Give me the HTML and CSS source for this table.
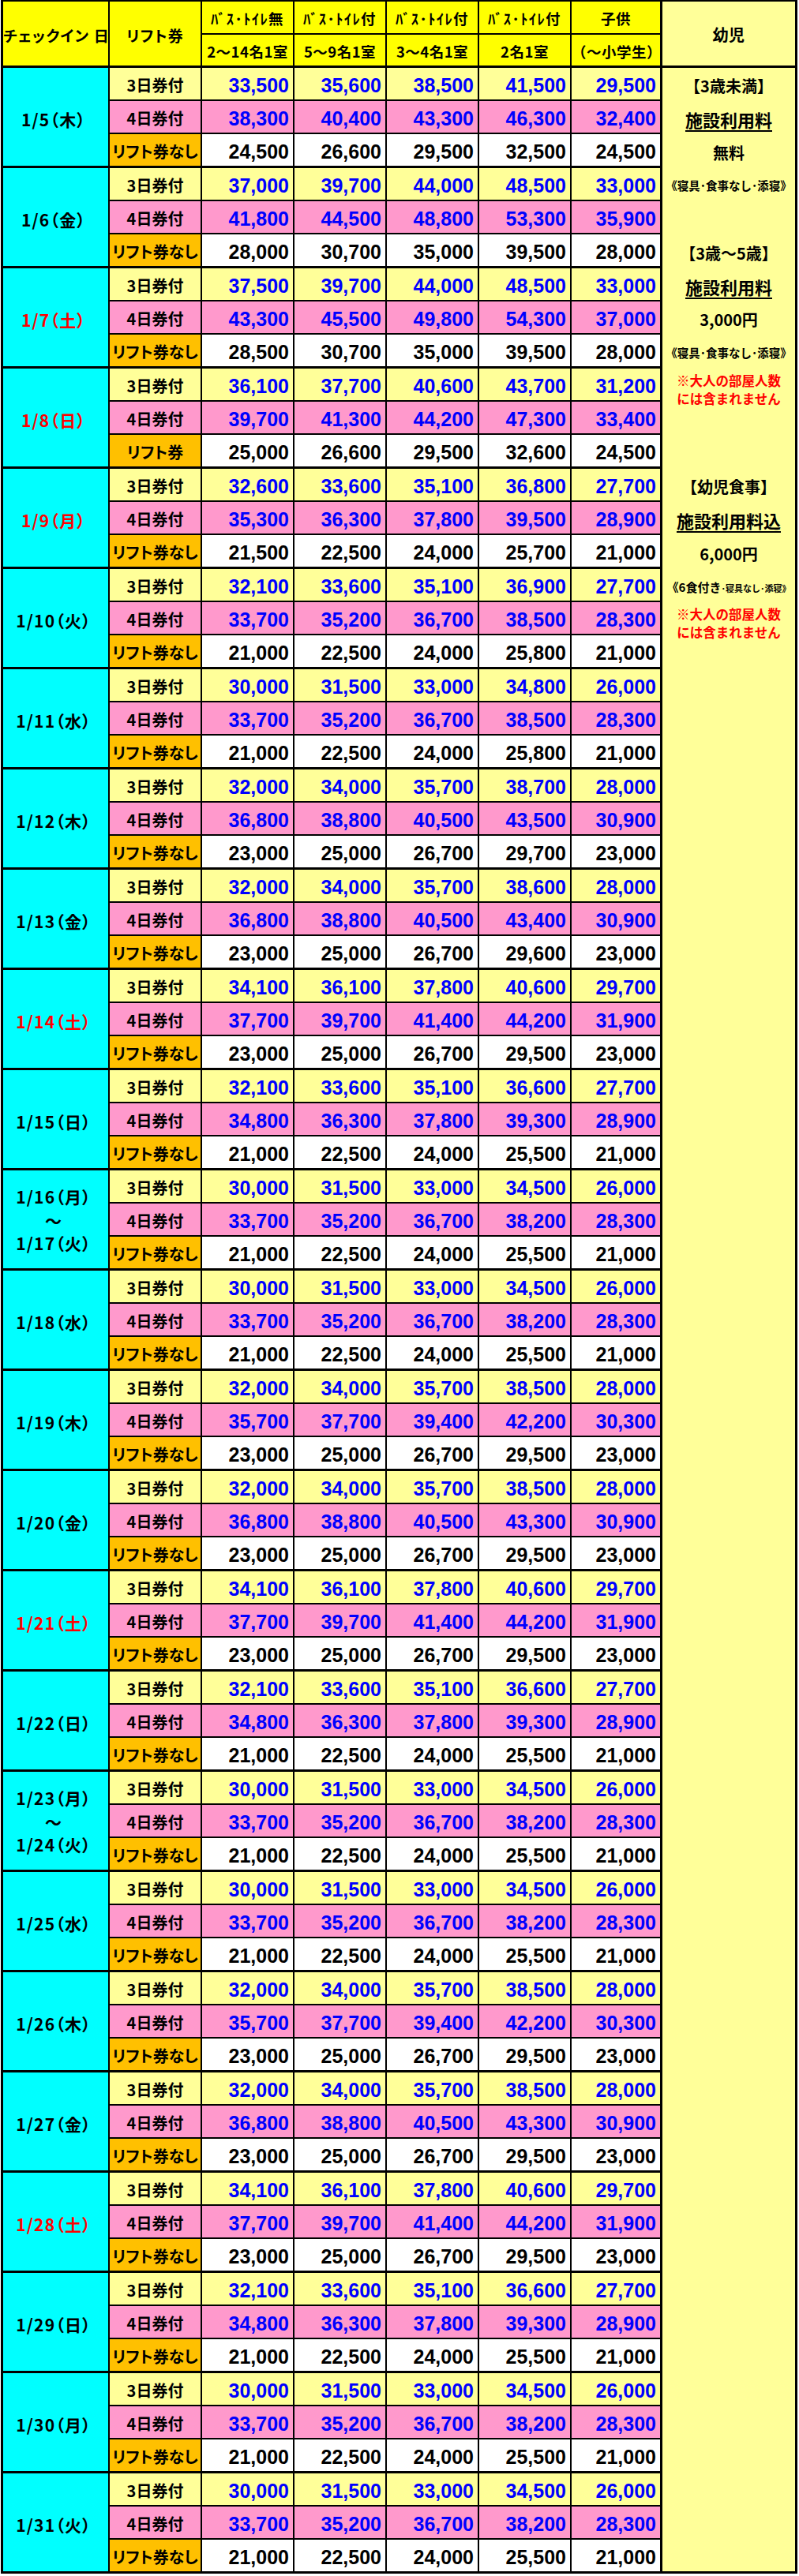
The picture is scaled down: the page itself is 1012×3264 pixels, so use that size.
FILE: index.html
```
<!DOCTYPE html>
<html lang="ja">
<head>
<meta charset="utf-8">
<title>料金表</title>
<link rel="stylesheet" href="styles.css">
</head>
<body>
<table class="price">
<colgroup>
<col class="c-day"><col class="c-lift"><col class="c-n"><col class="c-n"><col class="c-n"><col class="c-n"><col class="c-kid"><col class="c-inf">
</colgroup>
<thead>
<tr class="h1">
<th rowspan="2" class="hd">チェックイン 日</th>
<th rowspan="2" class="hd">リフト券</th>
<th class="hk">ﾊﾞｽ･ﾄｲﾚ無</th><th class="hk">ﾊﾞｽ･ﾄｲﾚ付</th><th class="hk">ﾊﾞｽ･ﾄｲﾚ付</th><th class="hk">ﾊﾞｽ･ﾄｲﾚ付</th><th>子供</th>
<th rowspan="2" class="hinf">幼児</th>
</tr>
<tr class="h2"><th>2～14名1室</th><th>5～9名1室</th><th>3～4名1室</th><th>2名1室</th><th>（～小学生）</th></tr>
</thead>
<tbody>
<tr class="r3"><td class="day" rowspan="3">1/5（木）</td><td class="lb">3日券付</td><td>33,500</td><td>35,600</td><td>38,500</td><td>41,500</td><td>29,500</td>
<td class="inf" rowspan="75">
<div class="info">
<div class="s">【3歳未満】</div>
<div class="s big"><span class="u">施設利用料</span></div>
<div class="s">無料</div>
<div class="s sm">《寝具･食事なし･添寝》</div>
<div class="s"></div>
<div class="s">【3歳～5歳】</div>
<div class="s big"><span class="u">施設利用料</span></div>
<div class="s">3,000円</div>
<div class="s sm">《寝具･食事なし･添寝》</div>
<div class="note">※大人の部屋人数<br>には含まれません</div>
<div class="s"></div>
<div class="s">【幼児食事】</div>
<div class="s big"><span class="u">施設利用料込</span></div>
<div class="s">6,000円</div>
<div class="s sm"><span class="sm1">《6食付き</span><span class="sm2">･寝具なし･添寝》</span></div>
<div class="note">※大人の部屋人数<br>には含まれません</div>
</div>
</td></tr>
<tr class="r4"><td class="lb">4日券付</td><td>38,300</td><td>40,400</td><td>43,300</td><td>46,300</td><td>32,400</td></tr>
<tr class="r0"><td class="lb">リフト券なし</td><td>24,500</td><td>26,600</td><td>29,500</td><td>32,500</td><td>24,500</td></tr>

<tr class="r3"><td class="day" rowspan="3">1/6（金）</td><td class="lb">3日券付</td><td>37,000</td><td>39,700</td><td>44,000</td><td>48,500</td><td>33,000</td></tr>
<tr class="r4"><td class="lb">4日券付</td><td>41,800</td><td>44,500</td><td>48,800</td><td>53,300</td><td>35,900</td></tr>
<tr class="r0"><td class="lb">リフト券なし</td><td>28,000</td><td>30,700</td><td>35,000</td><td>39,500</td><td>28,000</td></tr>

<tr class="r3"><td class="day red" rowspan="3">1/7（土）</td><td class="lb">3日券付</td><td>37,500</td><td>39,700</td><td>44,000</td><td>48,500</td><td>33,000</td></tr>
<tr class="r4"><td class="lb">4日券付</td><td>43,300</td><td>45,500</td><td>49,800</td><td>54,300</td><td>37,000</td></tr>
<tr class="r0"><td class="lb">リフト券なし</td><td>28,500</td><td>30,700</td><td>35,000</td><td>39,500</td><td>28,000</td></tr>

<tr class="r3"><td class="day red" rowspan="3">1/8（日）</td><td class="lb">3日券付</td><td>36,100</td><td>37,700</td><td>40,600</td><td>43,700</td><td>31,200</td></tr>
<tr class="r4"><td class="lb">4日券付</td><td>39,700</td><td>41,300</td><td>44,200</td><td>47,300</td><td>33,400</td></tr>
<tr class="r0"><td class="lb">リフト券</td><td>25,000</td><td>26,600</td><td>29,500</td><td>32,600</td><td>24,500</td></tr>

<tr class="r3"><td class="day red" rowspan="3">1/9（月）</td><td class="lb">3日券付</td><td>32,600</td><td>33,600</td><td>35,100</td><td>36,800</td><td>27,700</td></tr>
<tr class="r4"><td class="lb">4日券付</td><td>35,300</td><td>36,300</td><td>37,800</td><td>39,500</td><td>28,900</td></tr>
<tr class="r0"><td class="lb">リフト券なし</td><td>21,500</td><td>22,500</td><td>24,000</td><td>25,700</td><td>21,000</td></tr>

<tr class="r3"><td class="day" rowspan="3">1/10（火）</td><td class="lb">3日券付</td><td>32,100</td><td>33,600</td><td>35,100</td><td>36,900</td><td>27,700</td></tr>
<tr class="r4"><td class="lb">4日券付</td><td>33,700</td><td>35,200</td><td>36,700</td><td>38,500</td><td>28,300</td></tr>
<tr class="r0"><td class="lb">リフト券なし</td><td>21,000</td><td>22,500</td><td>24,000</td><td>25,800</td><td>21,000</td></tr>

<tr class="r3"><td class="day" rowspan="3">1/11（水）</td><td class="lb">3日券付</td><td>30,000</td><td>31,500</td><td>33,000</td><td>34,800</td><td>26,000</td></tr>
<tr class="r4"><td class="lb">4日券付</td><td>33,700</td><td>35,200</td><td>36,700</td><td>38,500</td><td>28,300</td></tr>
<tr class="r0"><td class="lb">リフト券なし</td><td>21,000</td><td>22,500</td><td>24,000</td><td>25,800</td><td>21,000</td></tr>

<tr class="r3"><td class="day" rowspan="3">1/12（木）</td><td class="lb">3日券付</td><td>32,000</td><td>34,000</td><td>35,700</td><td>38,700</td><td>28,000</td></tr>
<tr class="r4"><td class="lb">4日券付</td><td>36,800</td><td>38,800</td><td>40,500</td><td>43,500</td><td>30,900</td></tr>
<tr class="r0"><td class="lb">リフト券なし</td><td>23,000</td><td>25,000</td><td>26,700</td><td>29,700</td><td>23,000</td></tr>

<tr class="r3"><td class="day" rowspan="3">1/13（金）</td><td class="lb">3日券付</td><td>32,000</td><td>34,000</td><td>35,700</td><td>38,600</td><td>28,000</td></tr>
<tr class="r4"><td class="lb">4日券付</td><td>36,800</td><td>38,800</td><td>40,500</td><td>43,400</td><td>30,900</td></tr>
<tr class="r0"><td class="lb">リフト券なし</td><td>23,000</td><td>25,000</td><td>26,700</td><td>29,600</td><td>23,000</td></tr>

<tr class="r3"><td class="day red" rowspan="3">1/14（土）</td><td class="lb">3日券付</td><td>34,100</td><td>36,100</td><td>37,800</td><td>40,600</td><td>29,700</td></tr>
<tr class="r4"><td class="lb">4日券付</td><td>37,700</td><td>39,700</td><td>41,400</td><td>44,200</td><td>31,900</td></tr>
<tr class="r0"><td class="lb">リフト券なし</td><td>23,000</td><td>25,000</td><td>26,700</td><td>29,500</td><td>23,000</td></tr>

<tr class="r3"><td class="day" rowspan="3">1/15（日）</td><td class="lb">3日券付</td><td>32,100</td><td>33,600</td><td>35,100</td><td>36,600</td><td>27,700</td></tr>
<tr class="r4"><td class="lb">4日券付</td><td>34,800</td><td>36,300</td><td>37,800</td><td>39,300</td><td>28,900</td></tr>
<tr class="r0"><td class="lb">リフト券なし</td><td>21,000</td><td>22,500</td><td>24,000</td><td>25,500</td><td>21,000</td></tr>

<tr class="r3"><td class="day multi" rowspan="3">1/16（月）<br>～<br>1/17（火）</td><td class="lb">3日券付</td><td>30,000</td><td>31,500</td><td>33,000</td><td>34,500</td><td>26,000</td></tr>
<tr class="r4"><td class="lb">4日券付</td><td>33,700</td><td>35,200</td><td>36,700</td><td>38,200</td><td>28,300</td></tr>
<tr class="r0"><td class="lb">リフト券なし</td><td>21,000</td><td>22,500</td><td>24,000</td><td>25,500</td><td>21,000</td></tr>

<tr class="r3"><td class="day" rowspan="3">1/18（水）</td><td class="lb">3日券付</td><td>30,000</td><td>31,500</td><td>33,000</td><td>34,500</td><td>26,000</td></tr>
<tr class="r4"><td class="lb">4日券付</td><td>33,700</td><td>35,200</td><td>36,700</td><td>38,200</td><td>28,300</td></tr>
<tr class="r0"><td class="lb">リフト券なし</td><td>21,000</td><td>22,500</td><td>24,000</td><td>25,500</td><td>21,000</td></tr>

<tr class="r3"><td class="day" rowspan="3">1/19（木）</td><td class="lb">3日券付</td><td>32,000</td><td>34,000</td><td>35,700</td><td>38,500</td><td>28,000</td></tr>
<tr class="r4"><td class="lb">4日券付</td><td>35,700</td><td>37,700</td><td>39,400</td><td>42,200</td><td>30,300</td></tr>
<tr class="r0"><td class="lb">リフト券なし</td><td>23,000</td><td>25,000</td><td>26,700</td><td>29,500</td><td>23,000</td></tr>

<tr class="r3"><td class="day" rowspan="3">1/20（金）</td><td class="lb">3日券付</td><td>32,000</td><td>34,000</td><td>35,700</td><td>38,500</td><td>28,000</td></tr>
<tr class="r4"><td class="lb">4日券付</td><td>36,800</td><td>38,800</td><td>40,500</td><td>43,300</td><td>30,900</td></tr>
<tr class="r0"><td class="lb">リフト券なし</td><td>23,000</td><td>25,000</td><td>26,700</td><td>29,500</td><td>23,000</td></tr>

<tr class="r3"><td class="day red" rowspan="3">1/21（土）</td><td class="lb">3日券付</td><td>34,100</td><td>36,100</td><td>37,800</td><td>40,600</td><td>29,700</td></tr>
<tr class="r4"><td class="lb">4日券付</td><td>37,700</td><td>39,700</td><td>41,400</td><td>44,200</td><td>31,900</td></tr>
<tr class="r0"><td class="lb">リフト券なし</td><td>23,000</td><td>25,000</td><td>26,700</td><td>29,500</td><td>23,000</td></tr>

<tr class="r3"><td class="day" rowspan="3">1/22（日）</td><td class="lb">3日券付</td><td>32,100</td><td>33,600</td><td>35,100</td><td>36,600</td><td>27,700</td></tr>
<tr class="r4"><td class="lb">4日券付</td><td>34,800</td><td>36,300</td><td>37,800</td><td>39,300</td><td>28,900</td></tr>
<tr class="r0"><td class="lb">リフト券なし</td><td>21,000</td><td>22,500</td><td>24,000</td><td>25,500</td><td>21,000</td></tr>

<tr class="r3"><td class="day multi" rowspan="3">1/23（月）<br>～<br>1/24（火）</td><td class="lb">3日券付</td><td>30,000</td><td>31,500</td><td>33,000</td><td>34,500</td><td>26,000</td></tr>
<tr class="r4"><td class="lb">4日券付</td><td>33,700</td><td>35,200</td><td>36,700</td><td>38,200</td><td>28,300</td></tr>
<tr class="r0"><td class="lb">リフト券なし</td><td>21,000</td><td>22,500</td><td>24,000</td><td>25,500</td><td>21,000</td></tr>

<tr class="r3"><td class="day" rowspan="3">1/25（水）</td><td class="lb">3日券付</td><td>30,000</td><td>31,500</td><td>33,000</td><td>34,500</td><td>26,000</td></tr>
<tr class="r4"><td class="lb">4日券付</td><td>33,700</td><td>35,200</td><td>36,700</td><td>38,200</td><td>28,300</td></tr>
<tr class="r0"><td class="lb">リフト券なし</td><td>21,000</td><td>22,500</td><td>24,000</td><td>25,500</td><td>21,000</td></tr>

<tr class="r3"><td class="day" rowspan="3">1/26（木）</td><td class="lb">3日券付</td><td>32,000</td><td>34,000</td><td>35,700</td><td>38,500</td><td>28,000</td></tr>
<tr class="r4"><td class="lb">4日券付</td><td>35,700</td><td>37,700</td><td>39,400</td><td>42,200</td><td>30,300</td></tr>
<tr class="r0"><td class="lb">リフト券なし</td><td>23,000</td><td>25,000</td><td>26,700</td><td>29,500</td><td>23,000</td></tr>

<tr class="r3"><td class="day" rowspan="3">1/27（金）</td><td class="lb">3日券付</td><td>32,000</td><td>34,000</td><td>35,700</td><td>38,500</td><td>28,000</td></tr>
<tr class="r4"><td class="lb">4日券付</td><td>36,800</td><td>38,800</td><td>40,500</td><td>43,300</td><td>30,900</td></tr>
<tr class="r0"><td class="lb">リフト券なし</td><td>23,000</td><td>25,000</td><td>26,700</td><td>29,500</td><td>23,000</td></tr>

<tr class="r3"><td class="day red" rowspan="3">1/28（土）</td><td class="lb">3日券付</td><td>34,100</td><td>36,100</td><td>37,800</td><td>40,600</td><td>29,700</td></tr>
<tr class="r4"><td class="lb">4日券付</td><td>37,700</td><td>39,700</td><td>41,400</td><td>44,200</td><td>31,900</td></tr>
<tr class="r0"><td class="lb">リフト券なし</td><td>23,000</td><td>25,000</td><td>26,700</td><td>29,500</td><td>23,000</td></tr>

<tr class="r3"><td class="day" rowspan="3">1/29（日）</td><td class="lb">3日券付</td><td>32,100</td><td>33,600</td><td>35,100</td><td>36,600</td><td>27,700</td></tr>
<tr class="r4"><td class="lb">4日券付</td><td>34,800</td><td>36,300</td><td>37,800</td><td>39,300</td><td>28,900</td></tr>
<tr class="r0"><td class="lb">リフト券なし</td><td>21,000</td><td>22,500</td><td>24,000</td><td>25,500</td><td>21,000</td></tr>

<tr class="r3"><td class="day" rowspan="3">1/30（月）</td><td class="lb">3日券付</td><td>30,000</td><td>31,500</td><td>33,000</td><td>34,500</td><td>26,000</td></tr>
<tr class="r4"><td class="lb">4日券付</td><td>33,700</td><td>35,200</td><td>36,700</td><td>38,200</td><td>28,300</td></tr>
<tr class="r0"><td class="lb">リフト券なし</td><td>21,000</td><td>22,500</td><td>24,000</td><td>25,500</td><td>21,000</td></tr>

<tr class="r3"><td class="day" rowspan="3">1/31（火）</td><td class="lb">3日券付</td><td>30,000</td><td>31,500</td><td>33,000</td><td>34,500</td><td>26,000</td></tr>
<tr class="r4"><td class="lb">4日券付</td><td>33,700</td><td>35,200</td><td>36,700</td><td>38,200</td><td>28,300</td></tr>
<tr class="r0"><td class="lb">リフト券なし</td><td>21,000</td><td>22,500</td><td>24,000</td><td>25,500</td><td>21,000</td></tr>
</tbody>
</table>
</body>
</html>
```
FILE: styles.css
```
html, body {
  margin: 0;
  padding: 0;
  background: #ffffff;
}

.price {
  border-collapse: collapse;
  table-layout: fixed;
  width: 1009px;
  margin-left: 1px;
  font-family: "Noto Sans CJK JP", sans-serif;
  font-weight: 700;
  color: #000;
  border-top: 2px solid #000;
  border-left: 3px solid #000;
  border-right: 3px solid #000;
  border-bottom: 3px solid #000;
}

.c-day { width: 135.5px; }
.c-lift { width: 117px; }
.c-n { width: 117px; }
.c-kid { width: 114.5px; }
.c-inf { width: 171px; }

.price th,
.price td {
  border: 2px solid #000;
  padding: 0;
  overflow: hidden;
  white-space: nowrap;
}

/* header */
.price th {
  background: #ffff00;
  font-size: 18.5px;
  line-height: 1;
  text-align: center;
  vertical-align: middle;
  padding-top: 3px;
  letter-spacing: 0.5px;
}
.price tr.h1 { height: 42px; }
.price tr.h2 { height: 41.5px; }
.price tr.h2 th { border-bottom: 3px solid #000; }
.price th.hd {
  border-bottom: 3px solid #000;
  font-feature-settings: "palt";
  font-size: 19px;
  letter-spacing: 1.2px;
}
.price th.hk { letter-spacing: 1.4px; }
.price th.hinf {
  background: #ffff99;
  border-left: 3px solid #000;
  border-bottom: 3px solid #000;
  font-size: 20px;
}

/* body rows */
.price tr.r3 { height: 42.5px; }
.price tr.r4 { height: 42px; }
.price tr.r0 { height: 42.5px; }

.price td {
  font-family: "Liberation Sans", Arial, sans-serif;
  font-size: 25px;
  line-height: 1;
  text-align: right;
  vertical-align: middle;
  padding: 5px 5px 0 0;
}

.price tr.r3 td { background: #ffff99; color: #0000ff; }
.price tr.r4 td { background: #ff99cc; color: #0000ff; }
.price tr.r0 td { background: #ffffff; color: #000000; border-bottom: 3px solid #000; }

.price tr td.lb {
  font-family: "Noto Sans CJK JP", sans-serif;
  font-feature-settings: "palt";
  font-size: 20px;
  letter-spacing: 0;
  text-align: center;
  color: #000;
  padding: 4px 0 0 0;
}
.price tr.r0 td.lb { background: #ffc000; }

.price tr td.day {
  background: #00ffff;
  color: #000;
  font-family: "Noto Sans CJK JP", sans-serif;
  font-feature-settings: "palt";
  font-size: 21px;
  letter-spacing: 1.2px;
  text-align: center;
  padding: 6px 5px 0 0;
  border-bottom: 3px solid #000;
}
.price tr td.day.red { color: #ff0000; }
.price tr td.day.multi { line-height: 29.5px; padding-top: 3px; }

/* infant info column */
.price tr td.inf {
  background: #ffff99;
  color: #000;
  vertical-align: top;
  text-align: center;
  padding: 0;
  border-left: 3px solid #000;
  border-bottom: 3px solid #000;
  font-family: "Noto Sans CJK JP", sans-serif;
}

.info {
  display: flex;
  flex-direction: column;
}
.info .s {
  height: 42.33px;
  display: flex;
  align-items: center;
  justify-content: center;
  padding-top: 4px;
  box-sizing: border-box;
  font-size: 20px;
  line-height: 1;
}
.info .s.big { font-size: 22px; }
.info .u {
  text-decoration: underline;
  text-decoration-thickness: 2px;
  text-underline-offset: 4px;
}
.info .s.sm {
  font-size: 14.5px;
  align-items: baseline;
  padding-top: 15px;
}
.info .sm1 { font-size: 15px; }
.info .sm2 { font-size: 11px; }

.info .note {
  height: 84.66px;
  box-sizing: border-box;
  padding-top: 4px;
  color: #ff0000;
  font-size: 16.5px;
  line-height: 23px;
}
```
